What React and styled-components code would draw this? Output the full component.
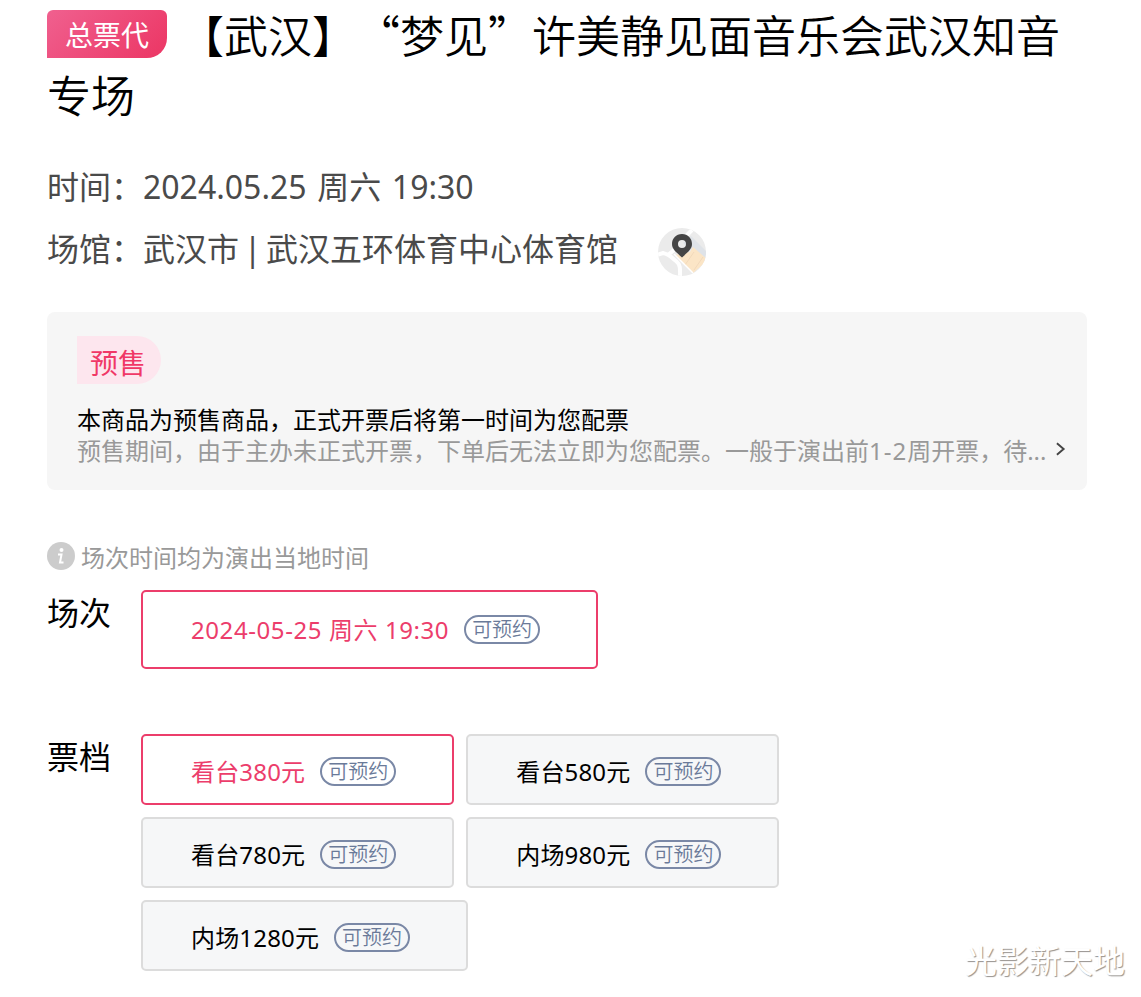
import styled, { createGlobalStyle } from "styled-components";

const GlobalStyle = createGlobalStyle`
  * {
    box-sizing: border-box;
  }
  body {
    margin: 0;
    background-color: #fff;
    color: #000;
    font-family: "Noto Sans", "Noto Sans CJK SC", sans-serif;
    text-spacing-trim: space-all;
  }
  h1, h2, p, ul {
    margin: 0;
    padding: 0;
    font-weight: 400;
  }
`;
const Page = styled.main`
  position: relative;
  width: 1141px;
  height: 997px;
  padding: 4px 54px 0 47px;
  overflow: hidden;
`;
const Title = styled.h1`
  height: 120px;
  font-family: "Noto Sans CJK SC", sans-serif;
  font-size: 44px;
  font-weight: 350;
  line-height: 60px;
`;
const Badge = styled.span`
  display: inline-block;
  width: 120px;
  height: 48px;
  margin: 6px 13px 0 0;
  border-radius: 6px 6px 20px 0;
  background: linear-gradient(135deg, #f0608f 0%, #ec3a68 90%);
  color: #fff;
  font-size: 28px;
  font-weight: 400;
  line-height: 49px;
  text-align: center;
  vertical-align: top;
`;
const Info = styled.section`
  display: flex;
  flex-direction: column;
  gap: 14px;
  margin-top: 39px;
`;
const InfoRow = styled.p`
  display: flex;
  align-items: center;
  height: 48px;
  color: #4a4a4a;
  font-size: 32px;
  line-height: 48px;
  white-space: pre;
  word-spacing: ${(props) => props.$space}px;
`;
const MapIcon = styled.svg`
  width: 48px;
  height: 48px;
  margin: 6px 0 0 40px;
`;
const Notice = styled.section`
  height: 178px;
  margin-top: 39px;
  padding: 24px 20px 0 30px;
  border-radius: 8px;
  background-color: #f6f6f6;
`;
const NoticeTag = styled.div`
  width: 84px;
  height: 48px;
  padding-left: 13px;
  border-radius: 0 24px 24px 0;
  background-color: #fde6ee;
  color: #f03867;
  font-size: 28px;
  line-height: 54px;
`;
const NoticeTitle = styled.h2`
  margin-top: 20px;
  font-size: 24px;
  line-height: 31px;
`;
const NoticeLine = styled.div`
  display: flex;
  align-items: center;
  height: 31px;
`;
const NoticeText = styled.p`
  color: #999;
  font-size: 24px;
  line-height: 31px;
  white-space: nowrap;
`;
const Weeks = styled.span`
  letter-spacing: 1px;
`;
const Chevron = styled.svg`
  width: 12px;
  height: 16px;
  margin: -4px 0 0 9px;
`;
const Tip = styled.p`
  display: flex;
  align-items: center;
  gap: 6px;
  height: 32px;
  margin-top: 50px;
  color: #999;
  font-size: 24px;
  line-height: 32px;

  svg {
    width: 28px;
    height: 28px;
  }
  span {
    padding-top: 3px;
  }
`;
const Field = styled.section`
  display: flex;
  align-items: flex-start;
  margin-top: ${(props) => props.$top}px;
`;
const Label = styled.h2`
  width: 94px;
  font-size: 32px;
  line-height: 46px;
`;
const Options = styled.ul`
  display: flex;
  flex-wrap: wrap;
  gap: 12px;
  width: 700px;
  list-style: none;
`;
const Option = styled.li`
  display: flex;
  align-items: center;
  height: ${(props) => (props.$tall ? 79 : 71)}px;
  padding: ${(props) => (props.$tall ? 1 : 4)}px 56px 0 48px;
  border: 2px solid ${(props) => (props.$active ? "#ec3d6b" : "#dcdcdc")};
  border-radius: 5px;
  background-color: ${(props) => (props.$active ? "#fff" : "#f6f7f8")};
  color: ${(props) => (props.$active ? "#ec3d6b" : "#000")};
  font-size: 24px;
  line-height: 32px;
  letter-spacing: ${(props) => (props.$tall ? 0.58 : 0.17)}px;
  white-space: nowrap;
`;
const Tag = styled.span`
  width: 76px;
  height: 29px;
  margin: ${(props) => (props.$low ? 0 : -2)}px 0 0 15px;
  border: 2px solid #7a88a6;
  border-radius: 15px;
  color: #6a7a99;
  font-size: 20px;
  font-weight: 350;
  line-height: 26px;
  letter-spacing: 0;
  text-align: center;
`;
const Watermark = styled.span`
  position: absolute;
  right: 16px;
  bottom: 12px;
  color: #fff;
  font-size: 32px;
  line-height: 48px;
  text-shadow: 1px 1px 1px #96928e;
`;

const tickets = ["看台380元", "看台580元", "看台780元", "内场980元", "内场1280元"];

export default function App() {
  return (
    <>
      <GlobalStyle />
      <Page lang="zh-CN">
        <Title>
          <Badge>总票代</Badge>
          【武汉】“梦见”许美静见面音乐会武汉知音专场
        </Title>
        <Info>
          <InfoRow $space={2.3}>时间：2024.05.25 周六 19:30</InfoRow>
          <InfoRow $space={-3.6}>
            场馆：武汉市 | 武汉五环体育中心体育馆
            <MapIcon viewBox="0 0 48 48">
              <defs>
                <clipPath id="map">
                  <circle cx="24" cy="24" r="24" />
                </clipPath>
              </defs>
              <g clipPath="url(#map)">
                <rect width="48" height="48" fill="#ebebeb" />
                <path d="M33 8 50 25v12L25 15z" fill="#dfe3e8" />
                <path d="m17 27 9-2 6-1 3-5 15 13-15 13-9-9z" fill="#fbe5c6" />
                <path d="m36 24-9 13M45 29l-9 13" stroke="#f1d9bb" />
                <path
                  d="M-1 27l6-2c6 1 8 4 13 8 5 4 4 9 4 17M10 27l6-5M28 8l6-6"
                  fill="none"
                  stroke="#fff"
                  strokeWidth="4"
                />
                <path d="m16 26 19 19" stroke="#fff" strokeWidth="1.5" />
              </g>
              <path
                d="M24 6c-6 0-10 4.500-10 10 0 5 4 8 10 13.500 6-5.500 10-8.500 10-13.500 0-5.500-4-10-10-10zm0 6a4 4 0 1 1 0 8 4 4 0 0 1 0-8z"
                fill="#454545"
              />
            </MapIcon>
          </InfoRow>
        </Info>
        <Notice>
          <NoticeTag>预售</NoticeTag>
          <NoticeTitle>本商品为预售商品，正式开票后将第一时间为您配票</NoticeTitle>
          <NoticeLine>
            <NoticeText>
              预售期间，由于主办未正式开票，下单后无法立即为您配票。一般于演出前
              <Weeks>1-2</Weeks>周开票，待...
            </NoticeText>
            <Chevron viewBox="0 0 12 16">
              <path d="m2 2 7 6-7 6" fill="none" stroke="#444" strokeWidth="2" />
            </Chevron>
          </NoticeLine>
        </Notice>
        <Tip>
          <svg viewBox="0 0 28 28">
            <circle cx="14" cy="14" r="14" fill="#ccc" />
            <circle cx="14.500" cy="8" r="2" fill="#fff" />
            <path d="M11 12.500h3.500l-1.500 8h3.500" fill="none" stroke="#fff" strokeWidth="2" />
          </svg>
          <span>场次时间均为演出当地时间</span>
        </Tip>
        <Field $top={18}>
          <Label>场次</Label>
          <Options>
            <Option $active $tall>
              2024-05-25 周六 19:30<Tag>可预约</Tag>
            </Option>
          </Options>
        </Field>
        <Field $top={65}>
          <Label>票档</Label>
          <Options>
            {tickets.map((name, index) => (
              <Option key={name} $active={index === 0}>
                {name}
                <Tag $low>可预约</Tag>
              </Option>
            ))}
          </Options>
        </Field>
        <Watermark>光影新天地</Watermark>
      </Page>
    </>
  );
}
